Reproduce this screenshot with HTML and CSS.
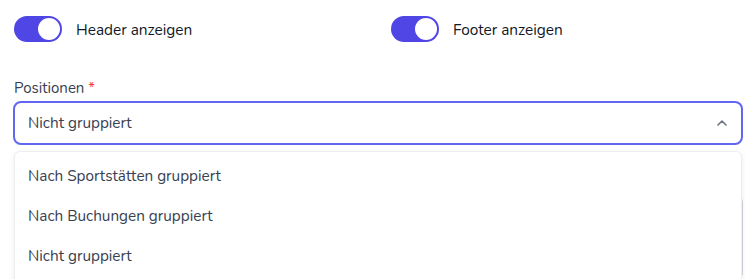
FILE: index.html
```html
<!DOCTYPE html>
<html lang="de">
<head>
<meta charset="utf-8">
<link rel="stylesheet" href="styles.css">
</head>
<body>
<div class="form">
  <div class="toggles">
    <label class="toggle-row">
      <span class="switch"><span class="knob"></span></span>
      <span class="toggle-label">Header anzeigen</span>
    </label>
    <label class="toggle-row">
      <span class="switch"><span class="knob"></span></span>
      <span class="toggle-label">Footer anzeigen</span>
    </label>
  </div>
  <div class="field">
    <div class="field-label">Positionen <span class="req">*</span></div>
    <div class="select-wrap">
      <div class="select">
        <span class="select-value">Nicht gruppiert</span>
        <svg class="chevron" width="14" height="14" viewBox="0 0 14 14"><path d="M3 9 L7 5 L11 9" fill="none" stroke="#6b7280" stroke-width="1.6" stroke-linecap="round" stroke-linejoin="round"/></svg>
      </div>
      <ul class="menu">
        <li class="menu-item">Nach Sportstätten gruppiert</li>
        <li class="menu-item">Nach Buchungen gruppiert</li>
        <li class="menu-item">Nicht gruppiert</li>
      </ul>
    </div>
    <textarea class="notes"></textarea>
  </div>
</div>
</body>
</html>
```
FILE: styles.css
```css
* { box-sizing: border-box; }
html { overflow: hidden; height: 279px; }
html, body { margin: 0; padding: 0; background: #fff; }
body { font-family: "Nunito", "Lato", "Noto Sans", sans-serif; color: #1f2937; }
.form { padding: 16px 2px 0 14px; }
.toggles { display: grid; grid-template-columns: 1fr 1fr; column-gap: 25px; }
.toggle-row { display: flex; align-items: center; gap: 14px; height: 26px; }
.switch { width: 48px; height: 26px; border-radius: 13px; background: #4f46e5; display: flex; align-items: center; justify-content: flex-end; padding: 2px; }
.knob { width: 22px; height: 22px; border-radius: 50%; background: #fff; }
.toggle-label { font-size: 15.4px; color: #111827; }
.field { margin-top: 36px; }
.field-label { font-size: 15px; color: #374151; line-height: 20px; margin-bottom: 3px; }
.req { color: #ef4444; }
.select-wrap { position: relative; }
.select { height: 44px; margin-left: -1px; border: 2px solid #6366f1; border-radius: 8px; display: flex; align-items: center; justify-content: space-between; padding: 0 12px 0 13px; }
.select-value { font-size: 15.3px; color: #374151; }
.chevron { display: block; }
.menu { position: absolute; left: 0; right: 1px; top: 50px; margin: 0; padding: 4px 0; list-style: none; background: #fff; border: 1px solid #eceef1; border-radius: 6px; box-shadow: 0 2px 6px rgba(0,0,0,0.08); z-index: 2; height: 134px; }
.menu-item { height: 40px; line-height: 40px; padding: 0 13px; font-size: 15.3px; color: #374151; }
.notes { display: block; width: 100%; height: 83px; margin-top: 51px; border: 1px solid #d1d5db; border-radius: 6px; }
```
